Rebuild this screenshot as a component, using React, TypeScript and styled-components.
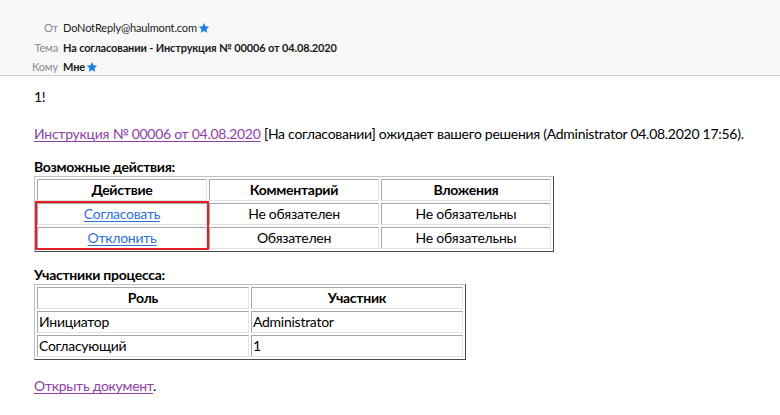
import React from "react";
import styled, { createGlobalStyle } from "styled-components";

const Global = createGlobalStyle`
  html, body { margin: 0; padding: 0; background: #ffffff; }
  body { width: 780px; height: 415px; overflow: hidden; }
`;

const Page = styled.div`
  width: 780px;
  height: 415px;
  display: flex;
  flex-direction: column;
`;

const Header = styled.div`
  background: #f8f8f8;
  border-bottom: 1px solid #c9d3de;
  height: 76px;
  box-sizing: border-box;
  padding-top: 18px;
  display: grid;
  grid-template-columns: 58px auto;
  grid-auto-rows: 19.5px;
  column-gap: 5px;
  align-items: center;
  align-content: start;
  font-family: "Lato", "Liberation Sans", sans-serif;
  font-size: 11px;
  letter-spacing: -0.15px;
`;

const Label = styled.div`
  color: #8a8a8a;
  text-align: right;
`;

const Value = styled.div<{ $bold?: boolean }>`
  color: #1a1a1a;
  font-weight: ${(p) => (p.$bold ? 700 : 400)};
  display: flex;
  align-items: center;
  gap: 1px;
`;

const Star = () => (
  <svg width="12" height="12" viewBox="0 0 24 24">
    <path
      d="M12 1.8l3.1 6.6 7.2.9-5.3 5 1.4 7.1L12 17.9l-6.4 3.5 1.4-7.1-5.3-5 7.2-.9z"
      fill="#1e7fe0"
    />
  </svg>
);

const Body = styled.div`
  padding: 7px 0 0 34px;
  font-family: "Lato", "Liberation Sans", sans-serif;
  font-size: 14px;
  letter-spacing: -0.27px;
  color: #000;
`;

const Para = styled.p<{ $mt?: number }>`
  margin: ${(p) => p.$mt ?? 0}px 0 0 0;
  line-height: 18px;
  white-space: nowrap;
`;

const Title = styled.p<{ $mt: number }>`
  margin: ${(p) => p.$mt}px 0 0 0;
  line-height: 18px;
  font-weight: 700;
`;

const Link = styled.a<{ $visited?: boolean }>`
  color: ${(p) => (p.$visited ? "#8e3fa8" : "#2f72d6")};
  text-decoration: underline;
  text-underline-offset: 2px;
`;

const TableWrap = styled.div`
  position: relative;
  width: fit-content;
  margin-top: 0px;
`;

const Table = styled.table<{ $w: number }>`
  display: table;
  width: ${(p) => p.$w}px;
  border-collapse: separate;
  border-spacing: 2px;
  border-style: solid;
  border-width: 1px;
  border-color: #bdbdbd #4a4a4a #4a4a4a #bdbdbd;
  font-size: 14px;
  line-height: 16px;
  table-layout: fixed;
`;

const Row = styled.tr`
  height: 22px;
`;

const Th = styled.th`
  padding: 0;
  font-weight: 700;
  text-align: center;
  border-style: solid;
  border-width: 1px;
  border-color: #a6a6a6 #e2e2e2 #e2e2e2 #a6a6a6;
`;

const Td = styled.td<{ $left?: boolean }>`
  padding: 0 1px;
  text-align: ${(p) => (p.$left ? "left" : "center")};
  border-style: solid;
  border-width: 1px;
  border-color: #a6a6a6 #e2e2e2 #e2e2e2 #a6a6a6;
`;

const Highlight = styled.div`
  position: absolute;
  left: 1px;
  top: 25px;
  width: 174px;
  height: 49px;
  box-sizing: border-box;
  border: 2px solid #e3202a;
  pointer-events: none;
`;

export default function App() {
  return (
    <Page>
      <Global />
      <Header>
        <Label>От</Label>
        <Value>
          DoNotReply@haulmont.com
          <Star />
        </Value>
        <Label>Тема</Label>
        <Value $bold>На согласовании - Инструкция № 00006 от 04.08.2020</Value>
        <Label>Кому</Label>
        <Value $bold>
          Мне
          <Star />
        </Value>
      </Header>
      <Body>
        <Para $mt={5}>1!</Para>
        <Para $mt={19}>
          <Link $visited href="#">
            Инструкция № 00006 от 04.08.2020
          </Link>{" "}
          [На согласовании] ожидает вашего решения (Administrator 04.08.2020 17:56).
        </Para>
        <Title $mt={15}>Возможные действия:</Title>
        <TableWrap>
          <Table $w={520}>
            <thead>
              <Row>
                <Th>Действие</Th>
                <Th>Комментарий</Th>
                <Th>Вложения</Th>
              </Row>
            </thead>
            <tbody>
              <Row>
                <Td>
                  <Link href="#">Согласовать</Link>
                </Td>
                <Td>Не обязателен</Td>
                <Td>Не обязательны</Td>
              </Row>
              <Row>
                <Td>
                  <Link href="#">Отклонить</Link>
                </Td>
                <Td>Обязателен</Td>
                <Td>Не обязательны</Td>
              </Row>
            </tbody>
          </Table>
          <Highlight />
        </TableWrap>
        <Title $mt={14}>Участники процесса:</Title>
        <TableWrap>
          <Table $w={432}>
            <thead>
              <Row>
                <Th>Роль</Th>
                <Th>Участник</Th>
              </Row>
            </thead>
            <tbody>
              <Row>
                <Td $left>Инициатор</Td>
                <Td $left>Administrator</Td>
              </Row>
              <Row>
                <Td $left>Согласующий</Td>
                <Td $left>1</Td>
              </Row>
            </tbody>
          </Table>
        </TableWrap>
        <Para $mt={17}>
          <Link $visited href="#">
            Открыть документ
          </Link>
          .
        </Para>
      </Body>
    </Page>
  );
}
